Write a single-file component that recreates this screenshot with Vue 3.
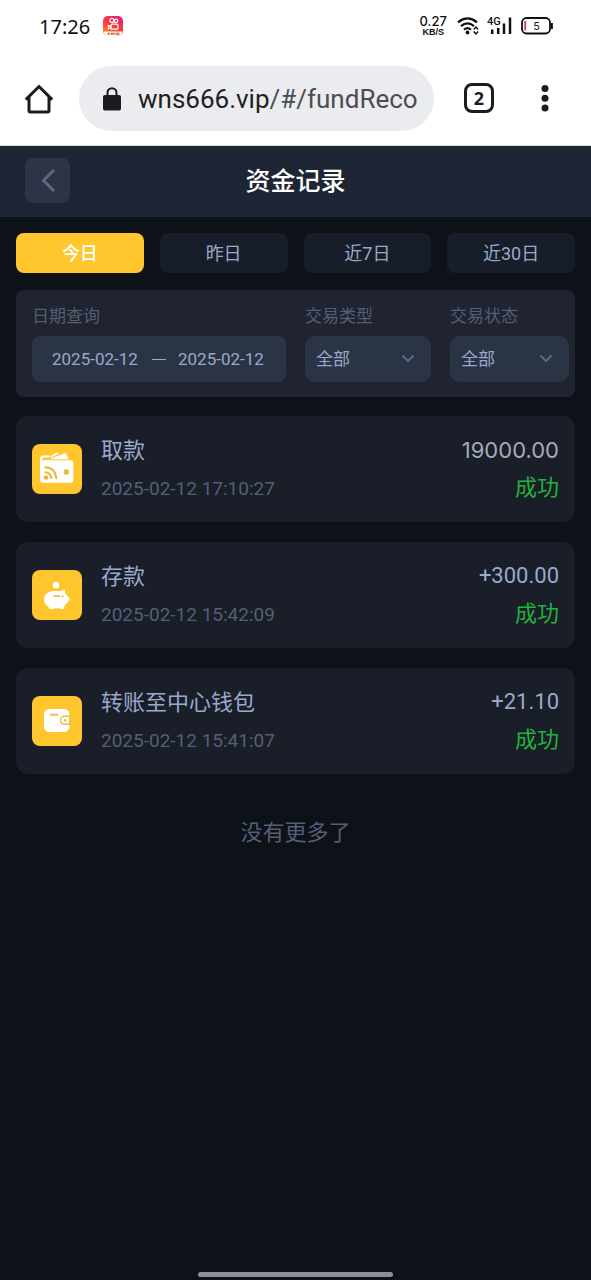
<script setup>
import { ref } from 'vue'

const tabs = ['今日', '昨日', '近7日', '近30日']
const activeTab = ref('今日')
const startDate = ref('2025-02-12')
const endDate = ref('2025-02-12')
const tradeType = ref('全部')
const tradeStatus = ref('全部')

const records = [
  { icon: 'withdraw', title: '取款', time: '2025-02-12 17:10:27', amount: '19000.00', status: '成功', muted: true },
  { icon: 'deposit', title: '存款', time: '2025-02-12 15:42:09', amount: '+300.00', status: '成功' },
  { icon: 'transfer', title: '转账至中心钱包', time: '2025-02-12 15:41:07', amount: '+21.10', status: '成功' }
]
</script>

<template>
  <div class="screen">
    <div class="status-bar">
      <span class="clock">17:26</span>
      <svg class="app-badge" width="20" height="20" viewBox="0 0 20 20" aria-hidden="true">
        <defs>
          <linearGradient id="badge" x1="0.8" y1="0" x2="0.3" y2="1">
            <stop offset="0" stop-color="#e8207c" />
            <stop offset="0.5" stop-color="#f83a3c" />
            <stop offset="1" stop-color="#ff8a2c" />
          </linearGradient>
        </defs>
        <rect width="20" height="20" rx="5" fill="url(#badge)" />
        <path d="M0.6 15.5h18.8a5 5 0 0 1-4.4 4.5H5a5 5 0 0 1-4.4-4.5z" fill="#fff4ea" />
        <g fill="none" stroke="#fff" stroke-width="1.2">
          <circle cx="8.8" cy="4.4" r="2" />
          <circle cx="13" cy="4.8" r="1.7" />
          <rect x="8" y="8.2" width="7" height="5" rx="1.3" />
          <path d="M8 10.600l-2.600-1.200v3.400l2.600-1" />
        </g>
        <path d="M4.500 17.600h2.600M5.800 16.500v2.400M8.600 16.600v2.300M10.200 16.600v2.300M8.600 17.700h1.600M12 16.500v2.400M13.800 17h2v1.600h-2z" stroke="#d8452f" stroke-width="0.9" fill="none" />
      </svg>
      <span class="spacer"></span>
      <span class="speed"><b>0.27</b><small>KB/S</small></span>
      <svg class="wifi" width="23" height="18" viewBox="0 0 23 18" aria-hidden="true">
        <g fill="none" stroke="#111" stroke-width="2.2">
          <path d="M1 5.3Q10.500-2.500 20 5.300" />
          <path d="M4 9.200Q10.500 3.600 17 9.200" />
          <path d="M7 12.700Q10.500 9.600 14 12.700" />
        </g>
        <circle cx="10.500" cy="15.500" r="1.900" fill="#111" />
        <path d="M16.700 12.600l2.200-2.500 2.200 2.500M16.700 14.400l2.200 2.500 2.200-2.500" fill="none" stroke="#111" stroke-width="1.500" />
      </svg>
      <svg class="signal" width="26" height="20" viewBox="0 0 26 20" aria-hidden="true">
        <text x="0" y="9" font-family="Roboto, sans-serif" font-size="11" font-weight="500" fill="#111">4G</text>
        <path d="M5.200 13.500V18M11.200 12V18M17 7.500V18M23 1.500V18" stroke="#111" stroke-width="2.500" />
      </svg>
      <svg class="battery" width="33" height="18" viewBox="0 0 33 18" aria-hidden="true">
        <rect x="1" y="1" width="28" height="15.500" rx="4.500" fill="none" stroke="#111" stroke-width="1.800" />
        <path d="M30.800 6v6" stroke="#111" stroke-width="2.200" />
        <path d="M4.200 4v9.500" stroke="#d4405c" stroke-width="1.800" />
        <text x="15.500" y="13" text-anchor="middle" font-family="Inter, sans-serif" font-size="11" fill="#222">5</text>
      </svg>
    </div>

    <div class="browser-bar">
      <button class="plain" type="button" aria-label="Home">
        <svg width="32" height="32" viewBox="0 0 32 32" aria-hidden="true">
          <path d="M2.800 17.600L16 4.500l13.200 13.100M6 15v13.500q0 1.500 1.500 1.500h17q1.500 0 1.500-1.500V15" fill="none" stroke="#1b1c1f" stroke-width="3" />
        </svg>
      </button>
      <button class="address" type="button">
        <svg width="18" height="24" viewBox="0 0 18 24" aria-hidden="true">
          <path d="M4.500 9V5.700a4.500 4.500 0 0 1 9 0V9" fill="none" stroke="#1b1c1f" stroke-width="2" />
          <rect x="0" y="8" width="18" height="15.500" rx="2" fill="#1b1c1f" />
        </svg>
        <span class="url">wns666.vip<span>/#/fundReco</span></span>
      </button>
      <button class="tab-count" type="button">2</button>
      <button class="plain" type="button" aria-label="Menu">
        <svg width="8" height="28" viewBox="0 0 8 28" aria-hidden="true">
          <g fill="#1b1c1f">
            <circle cx="4" cy="4.500" r="3.500" /><circle cx="4" cy="14.300" r="3.500" /><circle cx="4" cy="24" r="3.500" />
          </g>
        </svg>
      </button>
    </div>

    <header class="page-head">
      <button class="back" type="button" aria-label="返回">
        <svg width="16" height="24" viewBox="0 0 16 24" aria-hidden="true">
          <path d="M14 1L3.500 11.500 14 22" fill="none" stroke="#5e6885" stroke-width="3" />
        </svg>
      </button>
      <h1>资金记录</h1>
    </header>

    <main>
      <nav class="tabs">
        <button v-for="tab in tabs" :key="tab" type="button" :class="{ active: tab === activeTab }" @click="activeTab = tab">{{ tab }}</button>
      </nav>

      <section class="filters">
        <div class="field">
          <label for="start">日期查询</label>
          <div class="dates">
            <input id="start" v-model="startDate" type="text" />
            <span class="dash"></span>
            <input v-model="endDate" type="text" aria-label="结束日期" />
          </div>
        </div>
        <div class="field">
          <label for="type">交易类型</label>
          <div class="pick">
            <select id="type" v-model="tradeType"><option>全部</option></select>
            <svg width="14" height="10" viewBox="0 0 14 10" aria-hidden="true"><path d="M1.500 1.500L7 7 12.500 1.500" /></svg>
          </div>
        </div>
        <div class="field">
          <label for="status">交易状态</label>
          <div class="pick">
            <select id="status" v-model="tradeStatus"><option>全部</option></select>
            <svg width="14" height="10" viewBox="0 0 14 10" aria-hidden="true"><path d="M1.500 1.500L7 7 12.500 1.500" /></svg>
          </div>
        </div>
      </section>

      <ul class="records">
        <li v-for="r in records" :key="r.time">
          <svg class="kind" width="50" height="50" viewBox="0 0 50 50" aria-hidden="true">
            <rect width="50" height="50" rx="8" fill="#ffc62e" />
            <template v-if="r.icon === 'withdraw'">
              <path d="M8 15q0-3.500 3.500-3.500H19L16.500 13.500H12q-2 0-2 1.500t2 1.200H38q3.300 0 3.300 3.300V35.500q0 3.300-3.300 3.300H11.500Q8 38.800 8 35.500z" fill="#fff" />
              <path d="M19.500 11.500L23 9q1-.5 2.500 0l1.500.8-6.500 3.200-2.500.5z" fill="#fff" />
              <path d="M17.500 15.300L32 9.500q1.700-.6 2.500 1l2 4.800z" fill="#fff" />
              <circle cx="34.300" cy="28" r="2.700" fill="#e7bb32" />
              <circle cx="14" cy="33.500" r="2.300" fill="#e7bb32" />
              <path d="M12.500 28.300q6.500 0 6.800 6.700M12.500 23.300q11.300 0 11.800 11.700" fill="none" stroke="#e7bb32" stroke-width="2" />
            </template>
            <template v-else-if="r.icon === 'deposit'">
              <circle cx="24" cy="15.300" r="3.300" fill="#fff" />
              <path d="M12 29.500C12 23.500 17 21 23 21h6q1.800-1.600 4.300-1.300l-.5 3.200q2 1.500 2.700 3.600 2 .5 2 2.200t-1.800 3.200q-1.200 2.200-3 3.300l-.7 3q-.3.800-1.200.8H28.500q-.8 0-1-.8h-5q-.4.800-1.200.8H18q-1 0-1.200-1l-.7-1.800Q12 34 12 29.500z" fill="#fff" />
              <path d="M21.500 26h6.500" stroke="#ecc04a" stroke-width="1.800" />
              <circle cx="30.500" cy="26.500" r="1.100" fill="#ecc04a" />
            </template>
            <template v-else>
              <rect x="12" y="13" width="25.500" height="23" rx="5.500" fill="#fff" />
              <path d="M18 18.700h8" stroke="#ecc04a" stroke-width="2" />
              <path d="M38 20.300h-5.500a4 4 0 0 0 0 8H38z" fill="#fff" stroke="#f0bd30" stroke-width="1.500" />
              <circle cx="33" cy="24.300" r="1.200" fill="#e7bb32" />
            </template>
          </svg>
          <div class="info">
            <span class="title">{{ r.title }}</span>
            <time>{{ r.time }}</time>
          </div>
          <div class="result">
            <span class="amount" :class="{ muted: r.muted }">{{ r.amount }}</span>
            <span class="state">{{ r.status }}</span>
          </div>
        </li>
      </ul>
      <p class="end">没有更多了</p>
    </main>
    <div class="home-line"></div>
  </div>
</template>

<style>
body {
  background: #0d1219;
}
</style>

<style scoped>
* {
  box-sizing: border-box;
}
.screen {
  display: flex;
  flex-direction: column;
  min-height: 100vh;
  background: #0d1219;
  font-family: Roboto, "Noto Sans CJK SC", sans-serif;
  color: #9aa9cb;
}
button, input, select {
  margin: 0;
  border: 0;
  padding: 0;
  background: none;
  font: inherit;
  color: inherit;
}
button {
  cursor: pointer;
}
svg {
  display: block;
  flex: none;
}
.status-bar {
  display: flex;
  align-items: center;
  height: 52px;
  padding: 0 37px 0 39px;
  background: #fff;
  color: #111;
}
.clock {
  font-family: "Noto Sans", sans-serif;
  font-size: 20px;
}
.app-badge {
  margin-left: 13px;
}
.spacer {
  flex: 1;
}
.speed {
  display: flex;
  flex-direction: column;
  align-items: center;
}
.speed b {
  font-family: Inter, sans-serif;
  font-size: 13px;
  font-weight: 500;
  line-height: 13px;
}
.speed small {
  font-family: "Liberation Sans", sans-serif;
  font-size: 9px;
  font-weight: 700;
  line-height: 9px;
}
.wifi {
  margin-left: 10px;
}
.signal {
  margin-left: 7px;
}
.battery {
  margin-left: 8px;
}
.browser-bar {
  display: flex;
  align-items: center;
  height: 94px;
  padding: 0 42px 1px 23px;
  background: #fff;
  border-bottom: 1px solid #dcdee0;
}
.address {
  display: flex;
  flex: 1;
  align-items: center;
  gap: 17px;
  min-width: 0;
  height: 65px;
  margin: 0 30px 0 24px;
  padding: 2px 12px 0 24px;
  border-radius: 33px;
  background: #ebecf0;
}
.url {
  overflow: hidden;
  white-space: nowrap;
  font-size: 26px;
  color: #1f2023;
}
.url span {
  color: #4b4d52;
}
.tab-count {
  width: 30px;
  height: 30px;
  margin-right: 47px;
  border: 3px solid #1b1c1f;
  border-radius: 8px;
  font-family: "Noto Sans", sans-serif;
  font-size: 18px;
  font-weight: 700;
  line-height: 24px;
  color: #1b1c1f;
}
.page-head {
  display: grid;
  grid-template-columns: 45px 1fr 45px;
  align-items: center;
  height: 71px;
  padding: 0 25px 2px;
  background: #1e2534;
}
.back {
  display: grid;
  place-items: center;
  height: 45px;
  border-radius: 8px;
  background: #2c3446;
}
h1 {
  margin: 0;
  padding-bottom: 4px;
  font-size: 25px;
  font-weight: 500;
  text-align: center;
  color: #fff;
}
main {
  flex: 1;
  padding: 16px;
}
.tabs {
  display: grid;
  grid-template-columns: repeat(4, 1fr);
  gap: 16px;
}
.tabs button {
  height: 40px;
  padding-bottom: 3px;
  border-radius: 8px;
  background: #181e29;
  font-size: 18px;
}
.tabs .active {
  background: #ffc62e;
  font-weight: 500;
  color: #fff;
}
.filters {
  display: grid;
  grid-template-columns: 254fr 126fr 119fr;
  gap: 19px;
  margin-top: 17px;
  padding: 15px 6px 15px 16px;
  border-radius: 8px;
  background: #1f2430;
}
.field {
  display: flex;
  flex-direction: column;
  gap: 9px;
  min-width: 0;
}
label {
  font-size: 17px;
  line-height: 22px;
  color: #565e75;
}
.dates {
  display: flex;
  align-items: center;
  justify-content: center;
  gap: 12px;
  height: 46px;
  border-radius: 8px;
  background: #2b3445;
  font-size: 17px;
}
.dates input {
  width: 88px;
}
.dash {
  width: 14px;
  height: 1px;
  background: #9aa9cb;
}
.pick {
  display: grid;
  grid-template-columns: 1fr 14px;
  align-items: center;
  padding-right: 16px;
  border-radius: 10px;
  background: #2b3445;
}
.pick select {
  grid-area: 1 / 1 / 2 / 3;
  height: 46px;
  padding-left: 11px;
  appearance: none;
  font-size: 17px;
}
.pick svg {
  grid-area: 1 / 2;
  pointer-events: none;
  fill: none;
  stroke: #5e6885;
  stroke-width: 2;
}
.records {
  display: grid;
  gap: 20px;
  margin: 19px 0 0;
  padding: 0;
  list-style: none;
}
.records li {
  display: flex;
  align-items: center;
  height: 106px;
  padding: 0 16px;
  border-radius: 12px;
  background: #191e29;
}
.info, .result {
  display: flex;
  flex-direction: column;
  gap: 6px;
}
.info {
  flex: 1;
  margin-left: 19px;
  padding-top: 2px;
}
.result {
  align-items: flex-end;
}
.title, .amount, .state {
  font-size: 22px;
  line-height: 32px;
}
time {
  font-size: 19px;
  line-height: 32px;
  color: #565e75;
}
.muted {
  font-family: Inter, sans-serif;
  color: #a5abbb;
}
.state {
  color: #22b33c;
}
.end {
  margin: 43px 0 0;
  font-size: 22px;
  line-height: 32px;
  text-align: center;
  color: #565e75;
}
.home-line {
  align-self: center;
  width: 33%;
  height: 5px;
  margin-bottom: 3px;
  border-radius: 3px;
  background: #8b8f96;
}
</style>
